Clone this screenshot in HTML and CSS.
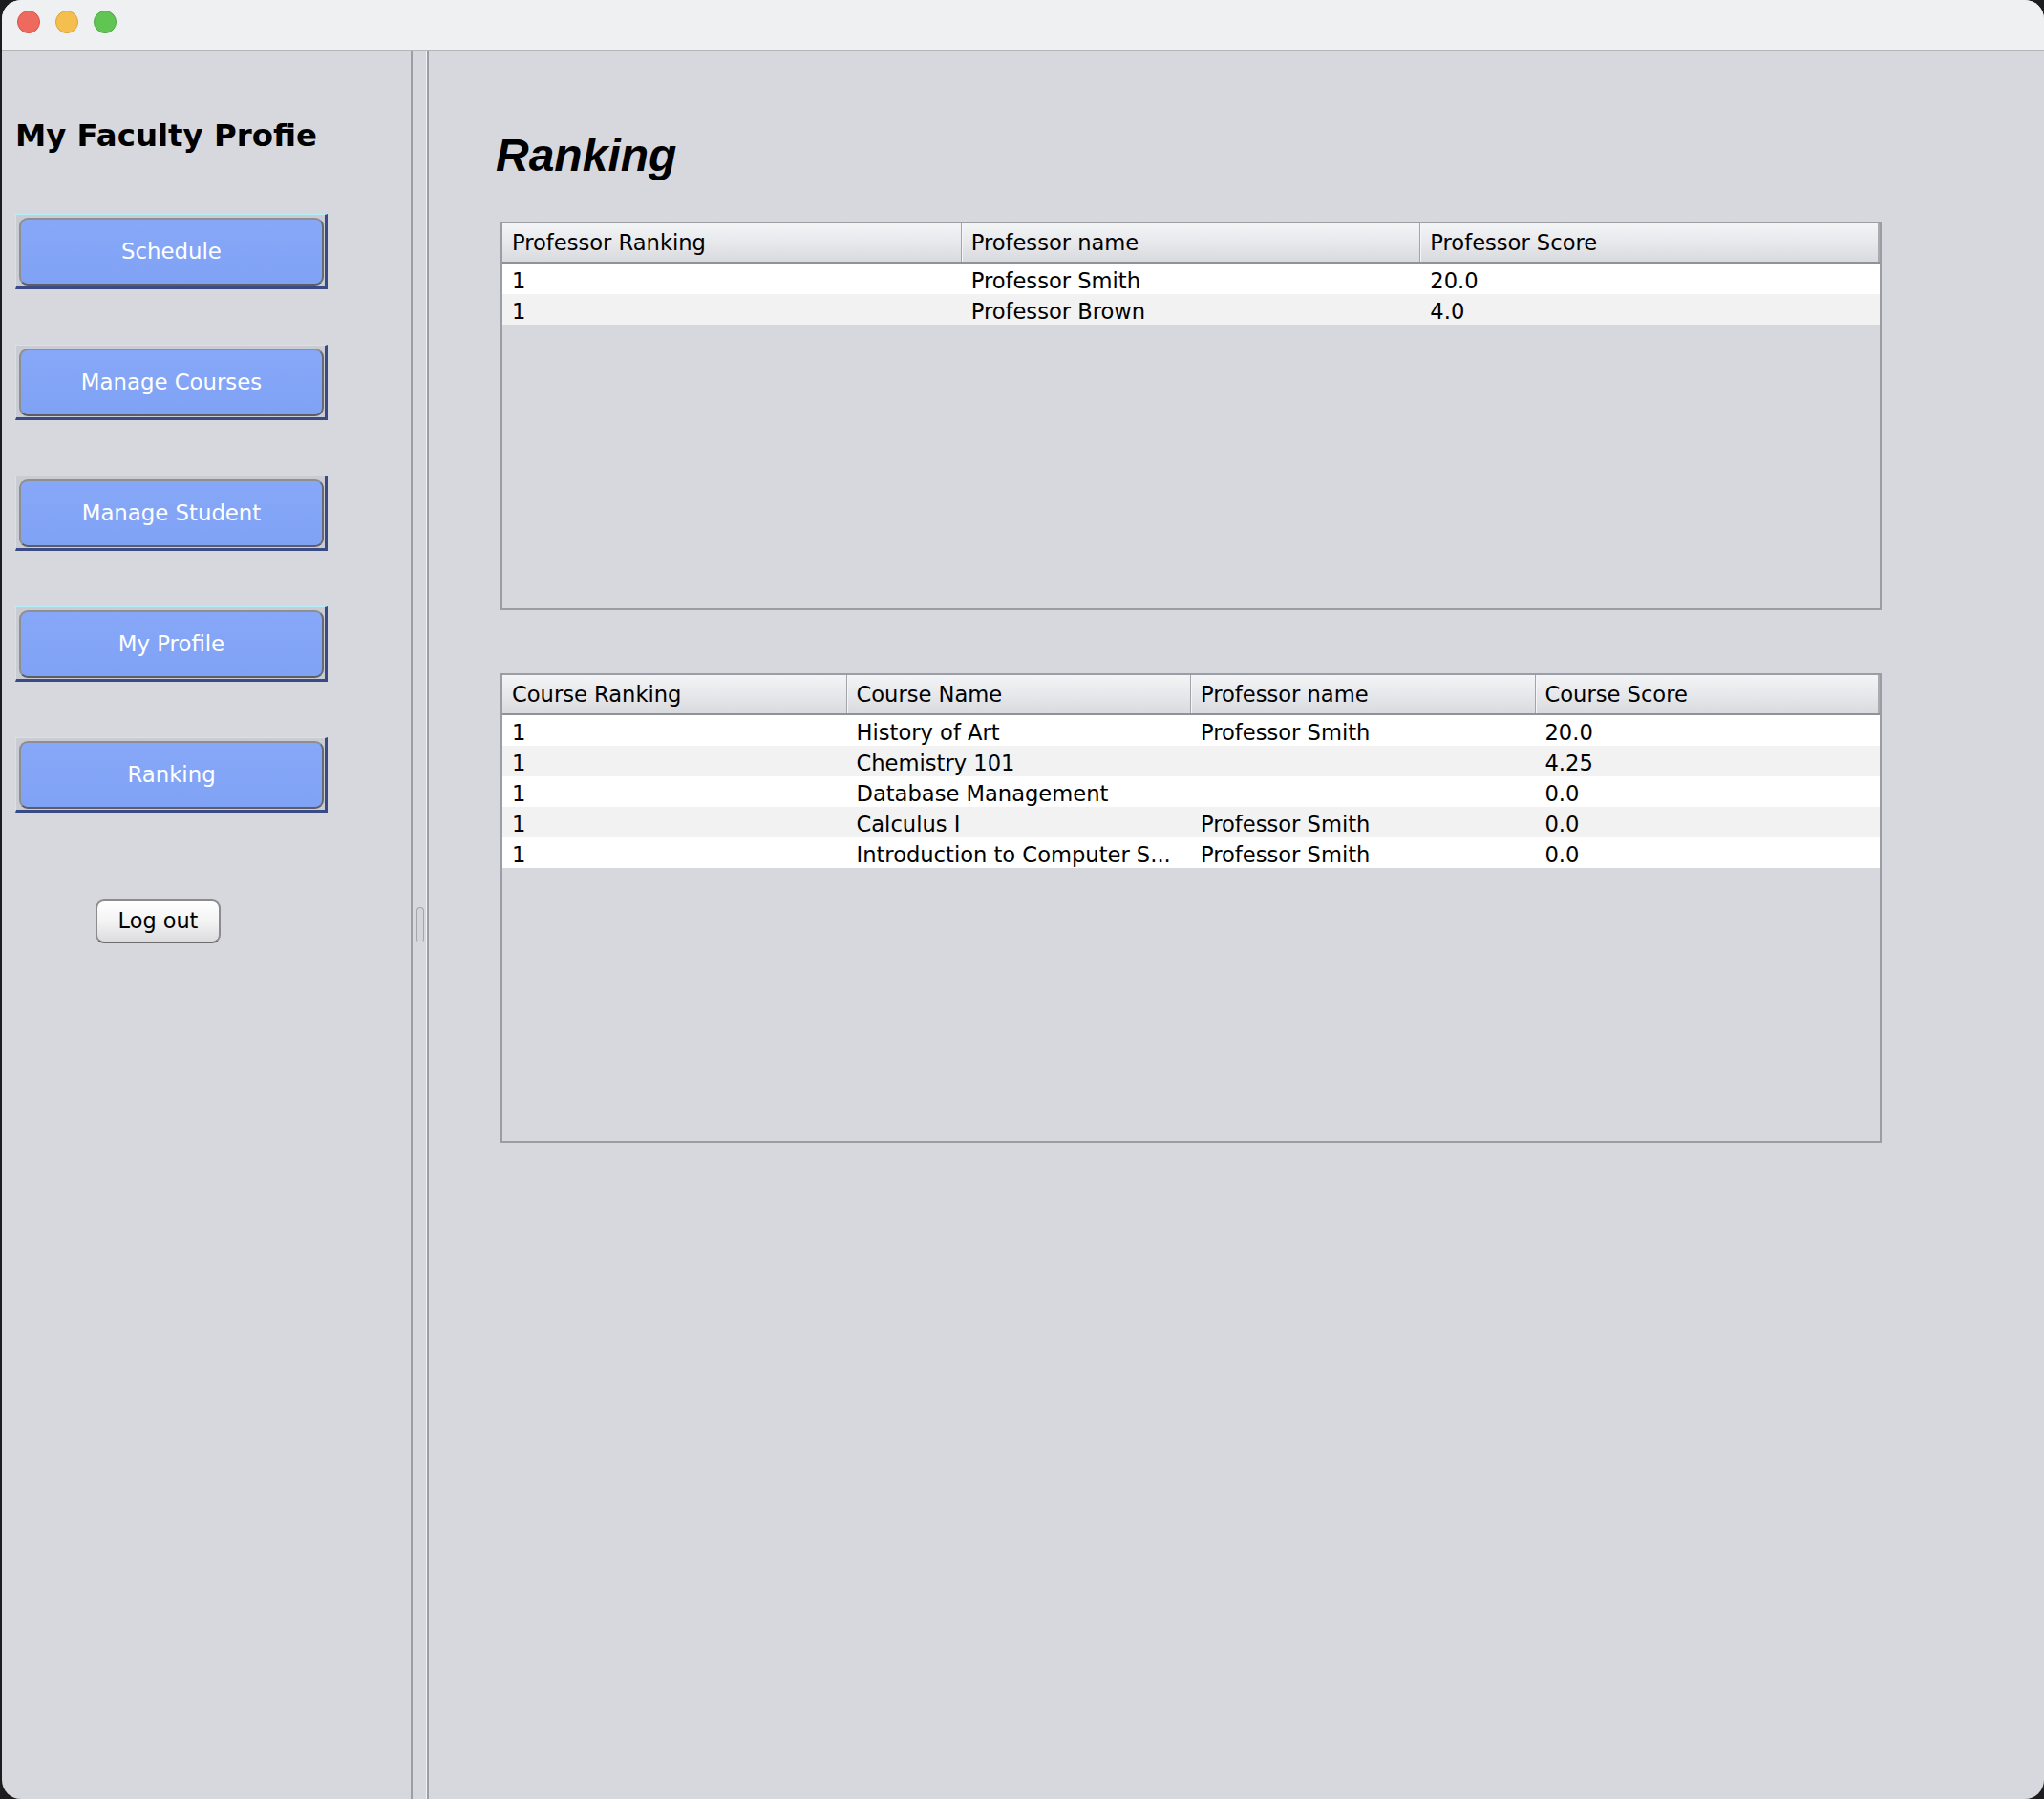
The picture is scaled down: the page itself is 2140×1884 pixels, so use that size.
FILE: index.html
```html
<!DOCTYPE html>
<html lang="en">
<head>
<meta charset="utf-8">
<title>My Faculty Profie</title>
<link rel="stylesheet" href="styles.css">
</head>
<body>
<div class="window">
  <header class="titlebar">
    <span class="light red"></span>
    <span class="light yellow"></span>
    <span class="light green"></span>
  </header>
  <div class="frame">
    <aside class="sidebar">
      <h1 class="side-title">My Faculty Profie</h1>
      <nav class="nav">
        <button class="nav-btn"><span class="nav-face">Schedule</span></button>
        <button class="nav-btn"><span class="nav-face">Manage Courses</span></button>
        <button class="nav-btn"><span class="nav-face">Manage Student</span></button>
        <button class="nav-btn"><span class="nav-face">My Profile</span></button>
        <button class="nav-btn"><span class="nav-face">Ranking</span></button>
      </nav>
      <button class="logout">Log out</button>
    </aside>
    <div class="divider"><span class="grip"></span></div>
    <main class="content">
      <h2 class="heading">Ranking</h2>

      <div class="table table-prof">
        <div class="thead cols3">
          <div class="th">Professor Ranking</div>
          <div class="th">Professor name</div>
          <div class="th">Professor Score</div>
        </div>
        <div class="tbody">
          <div class="tr cols3"><div class="td">1</div><div class="td">Professor Smith</div><div class="td">20.0</div></div>
          <div class="tr cols3"><div class="td">1</div><div class="td">Professor Brown</div><div class="td">4.0</div></div>
        </div>
      </div>

      <div class="table table-course">
        <div class="thead cols4">
          <div class="th">Course Ranking</div>
          <div class="th">Course Name</div>
          <div class="th">Professor name</div>
          <div class="th">Course Score</div>
        </div>
        <div class="tbody">
          <div class="tr cols4"><div class="td">1</div><div class="td">History of Art</div><div class="td">Professor Smith</div><div class="td">20.0</div></div>
          <div class="tr cols4"><div class="td">1</div><div class="td">Chemistry 101</div><div class="td"></div><div class="td">4.25</div></div>
          <div class="tr cols4"><div class="td">1</div><div class="td">Database Management</div><div class="td"></div><div class="td">0.0</div></div>
          <div class="tr cols4"><div class="td">1</div><div class="td">Calculus I</div><div class="td">Professor Smith</div><div class="td">0.0</div></div>
          <div class="tr cols4"><div class="td">1</div><div class="td">Introduction to Computer S...</div><div class="td">Professor Smith</div><div class="td">0.0</div></div>
        </div>
      </div>
    </main>
  </div>
</div>
</body>
</html>
```

FILE: styles.css
```css
* { box-sizing: border-box; }

html, body {
  margin: 0;
  padding: 0;
  background: #1d1d1f;
}

body {
  width: 2140px;
  height: 1884px;
  overflow: hidden;
  font-family: "DejaVu Sans", "Liberation Sans", sans-serif;
}

.window {
  margin-left: 2px;
  width: 2138px;
  height: 1884px;
  background: #d7d8dd;
  border-radius: 20px;
  overflow: hidden;
  display: flex;
  flex-direction: column;
}

.titlebar {
  height: 53px;
  flex: none;
  background: #eff0f2;
  border-bottom: 1px solid #b4b5b9;
  display: flex;
  align-items: center;
  gap: 16px;
  padding: 0 0 6px 16px;
}

.light {
  width: 24px;
  height: 24px;
  border-radius: 50%;
  border: 1px solid rgba(0,0,0,0.12);
}
.red { background: #ee6a5e; border-color: #d65448; }
.yellow { background: #f5bf4f; border-color: #d9a23a; }
.green { background: #61c554; border-color: #4ea83f; }

.frame {
  flex: 1;
  display: flex;
  min-height: 0;
}

/* ---------- sidebar ---------- */
.sidebar {
  width: 430px;
  flex: none;
  border-right: 2px solid #9a9fa7;
  padding: 73px 0 0 14px;
  display: flex;
  flex-direction: column;
  align-items: flex-start;
}

.side-title {
  margin: 0 0 65px 0;
  font-family: "DejaVu Sans", sans-serif;
  font-weight: bold;
  font-size: 32.4px;
  line-height: 33px;
  color: #000;
}

.nav {
  display: flex;
  flex-direction: column;
  gap: 58px;
}

.nav-btn {
  width: 327px;
  height: 79px;
  margin: 0;
  padding: 3px 1px 1px 3px;
  border-style: solid;
  border-width: 1px 3px 3px 1px;
  border-color: #b6eefa #3a4a84 #3a4a84 #b6eefa;
  background: #c9ccd3;
  display: flex;
  cursor: pointer;
}

.nav-face {
  flex: 1;
  display: flex;
  align-items: center;
  justify-content: center;
  border: 2px solid #8f8f8f;
  border-bottom-color: #5e5e62;
  border-right-color: #6a6a6e;
  border-radius: 9px;
  background: linear-gradient(#87a8f8, #80a2f5);
  color: #ffffff;
  font-family: "DejaVu Sans", sans-serif;
  font-size: 22.8px;
  padding-bottom: 1px;
}

.logout {
  margin: 91px 0 0 84px;
  width: 131px;
  height: 46px;
  padding: 0 0 2px 0;
  border: 2px solid #8c8c8e;
  border-bottom-color: #6d6d70;
  border-radius: 9px;
  background: linear-gradient(#ffffff, #f3f3f4 50%, #dcdcde);
  color: #000;
  font-family: "DejaVu Sans", sans-serif;
  font-size: 22.4px;
  cursor: pointer;
}

/* ---------- split divider ---------- */
.divider {
  width: 15px;
  flex: none;
  border-right: 1px solid #f1f2f4;
  display: flex;
  align-items: center;
  justify-content: center;
}

.grip {
  width: 8px;
  height: 37px;
  border: 1px solid #a2a6ad;
  border-bottom-color: #f4f5f7;
  border-radius: 4px;
  background: #d3d5da;
  margin-left: 1px;
}

/* ---------- content ---------- */
.content {
  flex: 1;
  border-left: 2px solid #9a9fa7;
  padding: 86px 0 0 75px;
  display: flex;
  flex-direction: column;
  align-items: flex-start;
}

.heading {
  margin: 0 0 45px -5px;
  font-family: "Liberation Sans", Arial, sans-serif;
  font-weight: bold;
  font-style: italic;
  font-size: 48px;
  line-height: 48px;
  color: #000;
}

.table {
  width: 1446px;
  border: 2px solid #9a9da4;
  background: #d7d8dd;
  font-family: "DejaVu Sans", sans-serif;
  font-size: 22.6px;
  color: #000;
}

.table-prof { height: 407px; }
.table-course { height: 492px; margin-top: 66px; }

.cols3 { display: grid; grid-template-columns: repeat(3, 1fr); }
.cols4 { display: grid; grid-template-columns: repeat(4, 1fr); }

.thead {
  height: 42px;
  background: linear-gradient(#f3f4f6, #e6e7ea 55%, #d9dadd);
  border-bottom: 2px solid #8f9298;
}

.th {
  height: 40px;
  line-height: 40px;
  padding-left: 10px;
  border-right: 1px solid #a2a4a9;
  box-shadow: 1px 0 0 #f6f6f8;
  white-space: nowrap;
  overflow: hidden;
}
.th:last-child {
  border-right: 2px solid #a9abb0;
  box-shadow: none;
}

.tr {
  height: 32px;
  background: #ffffff;
}
.tr:nth-child(even) { background: #f2f2f2; }

.td {
  padding: 4px 0 0 10px;
  line-height: 28px;
  white-space: nowrap;
  overflow: hidden;
}
.tr .td:not(:first-child) { padding-left: 10px; }
```
